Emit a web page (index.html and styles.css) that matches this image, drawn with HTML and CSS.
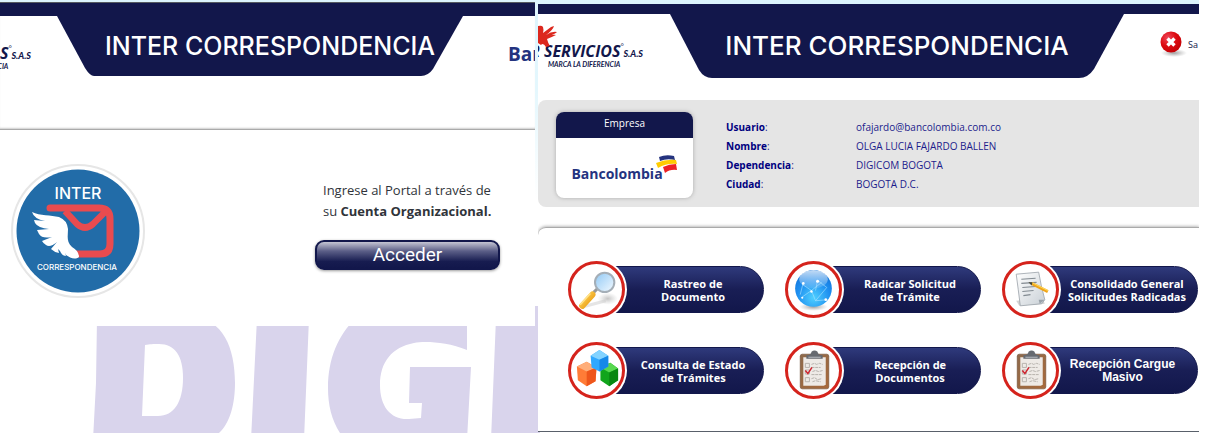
FILE: index.html
```html
<!DOCTYPE html>
<html lang="es">
<head>
<meta charset="utf-8">
<title>Inter Correspondencia</title>
<link rel="stylesheet" href="styles.css">
</head>
<body>
<svg width="0" height="0" class="defs" aria-hidden="true">
  <defs>
    <linearGradient id="glass" x1="0" y1="0" x2="1" y2="1"><stop offset="0" stop-color="#8fc8f5"/><stop offset="1" stop-color="#f4faff"/></linearGradient>
    <linearGradient id="handle" x1="0" y1="0" x2="1" y2="1"><stop offset="0" stop-color="#ffd75e"/><stop offset="1" stop-color="#e8960a"/></linearGradient>
    <radialGradient id="globe" cx=".5" cy=".75" r=".75"><stop offset="0" stop-color="#4fd0ff"/><stop offset=".6" stop-color="#1e8ff0"/><stop offset="1" stop-color="#1272d8"/></radialGradient>
    <linearGradient id="sheen" x1="0" y1="0" x2="0" y2="1"><stop offset="0" stop-color="#fff" stop-opacity=".75"/><stop offset="1" stop-color="#fff" stop-opacity=".1"/></linearGradient>
    <linearGradient id="wood" x1="0" y1="0" x2="1" y2="1"><stop offset="0" stop-color="#8d6a4c"/><stop offset="1" stop-color="#a8693a"/></linearGradient>
    <linearGradient id="page" x1="0" y1="0" x2="1" y2="1"><stop offset="0" stop-color="#fff"/><stop offset="1" stop-color="#c9d0d6"/></linearGradient>
    <radialGradient id="red" cx=".35" cy=".3" r=".8"><stop offset="0" stop-color="#f0485a"/><stop offset=".5" stop-color="#dc0a10"/><stop offset="1" stop-color="#c00004"/></radialGradient>
    <radialGradient id="shade"><stop offset="0" stop-color="#777" stop-opacity=".7"/><stop offset="1" stop-color="#999" stop-opacity="0"/></radialGradient>
    <symbol id="clipboard" viewBox="0 0 50 50">
      <rect x="12" y="9" width="28" height="34" rx="2" fill="url(#wood)" stroke="#6f4c33" stroke-width=".6"/>
      <path d="M15 12h22v27l-2 1H15z" fill="#eeeae6"/>
      <path d="M18 13.500h16v-3.500q-5-.500-5-3.500-3-2-6 0 0 3-5 3.500z" fill="#666a70"/>
      <path d="M20 12h12" stroke="#b9bdc2"/>
      <g fill="none" stroke="#b3aea9" stroke-width=".9"><path d="M17 18h4v4h-4zM17 24.500h4v4h-4zM17 32h4v4h-4z"/><path d="M23 19l3-1 2 1 3-1 3 1M23 22h9M24 26l3-1 3 1 4-1M23 29h10M23 33l3-1 3 2 4-1M24 36l3-1 5 1" stroke-dasharray="3 .7"/></g>
      <path d="M17 25l2.500 3 4-6" fill="none" stroke="#cf2530" stroke-width="1.500"/>
    </symbol>
  </defs>
</svg>
<svg class="watermark" viewBox="0 0 1205 433" preserveAspectRatio="xMinYMin meet" aria-hidden="true">
  <path fill="#d9d4ec" fill-rule="evenodd" d="M97 318h95c31 0 43 30 43 65 0 28-9 57-35 57H93l3-57zM145 345l-3 71h16c16 0 25-14 25-38 0-22-8-34-24-34-6 0-9 0-14 1z"/>
  <path fill="#d9d4ec" d="M257 318h52l-5 122h-53zM467 318v32c-20-8-42-9-53-7-22 4-34 19-34 42 0 22 11 35 29 34l12-1 1-15h-13l1-36h61l-4 73H345c-12-15-17-32-17-52 0-29 10-53 28-70zM496 318h39v-12h5v134h-49z"/>
</svg>
<main class="board">
  <section class="panel login">
    <header class="head">
      <div class="brand brand-cut"><span class="brand-name">OS</span><span class="brand-reg">°</span><span class="brand-sas">S.A.S</span><span class="brand-tag">NCIA</span></div>
      <div class="plate">
        <svg class="plate-bg" viewBox="0 0 406 60" preserveAspectRatio="none" aria-hidden="true"><path d="M0 0H406L376 53Q371 60 364 60H37Q33 60 28 52Z" fill="#12174b"/></svg>
        <h1 class="title">INTER CORRESPONDENCIA</h1>
      </div>
      <div class="bank-cut">Ban</div>
    </header>
    <div class="login-body">
      <svg class="badge" viewBox="0 0 140 140" role="img" aria-label="Inter Correspondencia">
        <circle cx="70" cy="70" r="66" fill="#fff" stroke="#e6e6e6" stroke-width="2"/>
        <circle cx="70" cy="70" r="61.500" fill="#226ca8"/>
        <text x="70" y="38" text-anchor="middle" class="badge-big">INTER</text>
        <text x="69" y="109" text-anchor="middle" class="badge-small">CORRESPONDENCIA</text>
        <path d="M42 47H91Q102 47 102 58V83Q102 93 92 93H66" fill="none" stroke="#e94b4f" stroke-width="7" stroke-linecap="round"/>
        <path d="M57 50L69 63Q77 70 85 63L99 49" fill="none" stroke="#e94b4f" stroke-width="6.500"/>
        <path d="M24 51C32 55 43 54 51 56Q59 59 60 68C60 75 58 80 64 86Q71 90 71 96C67 99 62 97 58 94L57 92 58 95Q54 95 52 90L50 88 51 92Q46 91 43 88L49 81Q42 87 38 84 35 82 34 80L44 76Q34 78 31 73L29 69 41 68Q30 67 27 62L26 59 37 60Q26 58 24 51Z" fill="#fff"/>
      </svg>
      <div class="access">
        <p class="lead">Ingrese al Portal a través de<br>su <strong>Cuenta Organizacional.</strong></p>
        <button class="enter" type="button">Acceder</button>
      </div>
    </div>
  </section>

  <section class="panel portal">
    <header class="head">
      <div class="brand brand-wide">
        <svg class="bird" viewBox="0 0 20 22" aria-hidden="true"><path d="M0 1Q4 0 5 2Q6 5 5 8L13 2 16 1Q15 5 8 10Q14 6 19 7Q17 9 11 11 16 9 18 10 14 12 9 14 10 18 12 21L8 22Q5 17 3 20L0 18z" fill="#dc281e"/></svg>
        <span class="brand-name">R SERVICIOS</span><span class="brand-reg">°</span><span class="brand-sas">S.A.S</span><span class="brand-tag">MARCA LA DIFERENCIA</span>
      </div>
      <div class="plate">
        <svg class="plate-bg" viewBox="0 0 454 64" preserveAspectRatio="none" aria-hidden="true"><path d="M0 0H454L424 55Q418 64 409 64H42Q34 64 29 56Z" fill="#12174b"/></svg>
        <h1 class="title title-big">INTER CORRESPONDENCIA</h1>
      </div>
      <a class="exit" href="#salir">
        <svg class="exit-icon" viewBox="0 0 28 28" aria-hidden="true"><ellipse cx="15" cy="23" rx="13" ry="4" fill="url(#shade)"/><circle cx="12" cy="12" r="10.500" fill="url(#red)"/><path d="M8.500 8.500l7 7M15.500 8.500l-7 7" stroke="#fff" stroke-width="3.400"/></svg>
        <span class="exit-text">Sa</span>
      </a>
    </header>
    <div class="profile">
      <div class="company">
        <h2 class="company-head">Empresa</h2>
        <div class="company-logo"><span>Bancolombia</span>
          <svg class="flag" viewBox="0 0 22 18" aria-hidden="true"><path d="M3 2Q10-1 18 1L19 5Q11 3 4 6z" fill="#24337f"/><path d="M0 8Q10 4 20 5L21 9Q11 8 2 13z" fill="#fc0"/><path d="M7 12Q13 9 20 9L21 15Q14 14 9 18z" fill="#ed2224"/></svg>
        </div>
      </div>
      <dl class="facts">
        <dt><b>Usuario</b>:</dt><dd>ofajardo@bancolombia.com.co</dd>
        <dt><b>Nombre</b>:</dt><dd>OLGA LUCIA FAJARDO BALLEN</dd>
        <dt><b>Dependencia</b>:</dt><dd>DIGICOM BOGOTA</dd>
        <dt><b>Ciudad</b>:</dt><dd>BOGOTA D.C.</dd>
      </dl>
    </div>
    <nav class="menu">
      <a class="item" href="#rastreo"><span class="disc"><svg viewBox="0 0 50 50" aria-hidden="true"><ellipse cx="36" cy="34" rx="10" ry="6" fill="url(#shade)" opacity=".6"/><path d="M12 42L34 36" stroke="#ccc" stroke-width="3" opacity=".5"/><path d="M22 28l4-4" stroke="#999" stroke-width="3"/><path d="M11 41L21 30" stroke="url(#handle)" stroke-width="6" stroke-linecap="round"/><path d="M9 40L19 29" stroke="#ffe38c" stroke-width="1.500"/><circle cx="33" cy="18" r="9.500" fill="url(#glass)" stroke="#a4aeb7" stroke-width="2"/></svg></span><span class="pill">Rastreo de<br>Documento</span></a>
      <a class="item" href="#radicar"><span class="disc"><svg viewBox="0 0 50 50" aria-hidden="true"><ellipse cx="25" cy="42" rx="14" ry="4" fill="url(#shade)"/><circle cx="25" cy="24" r="18" fill="url(#globe)"/><ellipse cx="25" cy="15" rx="14" ry="9" fill="url(#sheen)"/><path d="M14 20l9 6 10-8M23 26l4 10 12-1M23 26l-10 7M27 36l11-13-9-7-2 10M15 18l-3 12" fill="none" stroke="#a9e2ff" stroke-width=".6"/><g fill="#fff"><circle cx="15" cy="19" r="1.300"/><circle cx="29" cy="17" r="1.500"/><circle cx="23" cy="27" r="1.200"/><circle cx="37" cy="35" r="1.300"/><circle cx="14" cy="33" r="1"/></g></svg></span><span class="pill">Radicar Solicitud<br>de Trámite</span></a>
      <a class="item" href="#consolidado"><span class="disc"><svg viewBox="0 0 50 50" aria-hidden="true"><path d="M11 36l3 5 25-2-2-5z" fill="#aaa" opacity=".5"/><path d="M11 10L33 8Q35 20 39 35L36 39 15 41Q13 25 11 10z" fill="url(#page)" stroke="#9ba3aa" stroke-width=".8"/><path d="M34 39l5-4-6 0z" fill="#99a2aa"/><path d="M16 15l14-1M16 19l15-1M17 23l13-1M17 27l11-1M18 31l7-1" stroke="#828a91" stroke-width="1.100"/><path d="M26 19L42 27" stroke="#f0a51a" stroke-width="3"/><path d="M26 18L42 26" stroke="#ffd95c"/><path d="M23 18l4 0-1 3z" fill="#443"/></svg></span><span class="pill">Consolidado General<br>Solicitudes Radicadas</span></a>
      <a class="item" href="#consulta"><span class="disc"><svg viewBox="-1 2 52 50" aria-hidden="true"><path d="M29 24l10-5 8 6v12l-9 6-9-6z" fill="#11a51c"/><path d="M29 24l10-5 8 6-9 4z" fill="#57d84f"/><path d="M38 29l9-4v12l-9 6z" fill="#078711"/><path d="M5 23l10-5 10 6-1 14-9 5-9-6z" fill="#ff7c37"/><path d="M5 23l10-5 10 6-10 4z" fill="#ffae7a"/><path d="M15 28l10-4-1 14-9 5z" fill="#ee561c"/><path d="M19 12l9-6 9 6v11l-9 5-8-4z" fill="#30a8ff"/><path d="M19 12l9-6 9 6-9 4z" fill="#83d3ff"/><path d="M28 16l9-4v11l-9 5z" fill="#1688e8"/></svg></span><span class="pill">Consulta de Estado<br>de Trámites</span></a>
      <a class="item" href="#recepcion"><span class="disc"><svg aria-hidden="true"><use href="#clipboard"/></svg></span><span class="pill">Recepción de<br>Documentos</span></a>
      <a class="item" href="#masivo"><span class="disc"><svg aria-hidden="true"><use href="#clipboard"/></svg></span><span class="pill pill-alt">Recepción Cargue<br>Masivo</span></a>
    </nav>
  </section>
</main>
</body>
</html>
```
FILE: styles.css
```css
* { box-sizing: border-box; }
body {
  margin: 0;
  font-family: "Open Sans", "Noto Sans", sans-serif;
  background: linear-gradient(#dcf4fd, #e4f7fd 90px, #fff 200px);
  overflow-x: hidden;
}
.defs { position: absolute; }
.watermark { position: absolute; left: 0; top: 0; width: 100%; z-index: -1; }
.board {
  display: grid;
  grid-template-columns: 535fr 661fr;
  gap: 3px;
  align-items: start;
  padding: 2px 6px 2px 0;
  background: linear-gradient(#fff, #fff) right / 6px 100% no-repeat;
}
.panel { background: #fff; overflow: hidden; min-width: 0; }
.login { border-top: 1px solid #555a60; }
.portal { margin-top: 2px; border-bottom: 1px solid #59606a; }

.head { display: grid; color: #12174b; }
.login .head {
  grid-template-columns: minmax(0, 57fr) minmax(0, 406fr) minmax(0, 72fr);
  border-top: 13px solid #12174b;
  padding-bottom: 53px;
  border-bottom: 1px solid #aaa;
  box-shadow: 0 -2px 2px -1px #ccc inset;
}
.portal .head {
  grid-template-columns: minmax(0, 132fr) minmax(0, 454fr) minmax(0, 75fr);
  border-top: 10px solid #12174b;
  padding-bottom: 22px;
}
.plate { display: grid; align-items: center; justify-items: center; height: 60px; }
.portal .plate { height: 64px; }
.plate-bg { grid-area: 1 / 1; width: 100%; height: 100%; }
.title {
  grid-area: 1 / 1;
  z-index: 1;
  margin: 0;
  color: #fff;
  font: 500 25px/32px Inter, sans-serif;
  white-space: nowrap;
}
.login .title { margin-left: 20px; }
.portal .title-big { font-size: 26px; }

.brand {
  display: grid;
  grid-template-columns: auto 3px auto;
  align-content: center;
  align-items: baseline;
  justify-content: end;
  position: relative;
  white-space: nowrap;
}
.brand-cut { padding: 21px 26px 0 0; }
.brand-wide { padding: 18px 27px 0 0; }
.brand-name { font: italic 700 16px/18px "Open Sans", sans-serif; }
.brand-reg { font-size: 8px; align-self: start; line-height: 8px; }
.brand-sas { font: italic 900 9px/12px Lato, sans-serif; }
.brand-tag { grid-column: 1; justify-self: end; font: italic 700 7px/8px Lato, sans-serif; }
.bird { position: absolute; left: 0; top: 11px; width: 20px; height: 22px; }
.bank-cut {
  align-self: center;
  justify-self: start;
  padding: 16px 0 0 45px;
  color: #24337f;
  font: 700 19px/24px "Open Sans", sans-serif;
}

.login-body { display: flex; justify-content: space-between; padding: 31px 35px 25px 8px; }
.badge { width: 140px; height: 140px; flex: none; }
.badge-big { font: 500 16px Inter, sans-serif; fill: #fff; }
.badge-small { font: 500 8px Inter, sans-serif; fill: #fff; }
.access { width: 185px; padding-top: 19px; }
.lead { margin: 0 0 18px 8px; font-size: 13px; line-height: 21px; color: #30343a; white-space: nowrap; }
.enter {
  display: block;
  width: 100%;
  height: 30px;
  border: 2px solid #12174b;
  border-radius: 9px;
  background: linear-gradient(#c4c5d3, #5b5e87 35%, #171c50 75%, #12174b);
  box-shadow: 0 1px 3px #999;
  color: #fff;
  font: 400 19px/24px Roboto, sans-serif;
  padding: 0;
}

.exit { display: flex; gap: 1px; align-items: center; padding: 0 0 4px 35px; white-space: nowrap; color: #12174b; text-decoration: none; font-size: 9px; }
.exit-icon { width: 28px; height: 28px; flex: none; }

.profile { display: flex; padding: 12px 18px 9px; gap: 33px; background: #e5e5e5; border-radius: 8px 0 0 8px; }
.company { width: 137px; flex: none; border-radius: 8px; overflow: hidden; background: #fff; box-shadow: 0 0 4px #aaa; }
.company-head { margin: 0; height: 26px; background: #12174b; color: #fff; font-size: 10px; font-weight: 400; line-height: 22px; text-align: center; }
.company-logo { display: flex; height: 60px; align-items: center; justify-content: center; padding-top: 12px; color: #24337f; font: 700 14px/20px "Open Sans", sans-serif; }
.flag { width: 22px; height: 18px; margin: 0 0 20px -7px; }
.facts { display: grid; grid-template-columns: 130px 1fr; align-content: start; margin: 6px 0 0; color: #1c1c8c; font-size: 10px; line-height: 19px; }
.facts dd { margin: 0; }
.facts b { color: #00007f; }

.menu {
  display: grid;
  grid-template-columns: 196px 196px 196px;
  justify-content: space-between;
  row-gap: 24px;
  margin-top: 20px;
  padding: 33px 1px 32px 30px;
  border-top: 1px solid #aaa;
  border-radius: 8px 0 0 0;
  box-shadow: 0 -1px 3px #bbb;
}
.item { display: flex; align-items: center; color: #fff; text-decoration: none; }
.disc { z-index: 1; flex: none; display: grid; width: 57px; height: 57px; border: 3px solid #d5231c; border-radius: 50%; background: #fff; box-shadow: 0 0 0 2px #fff; }
.disc svg { width: 100%; height: 100%; }
.pill {
  flex: 1;
  display: grid;
  align-content: center;
  height: 47px;
  margin-left: -12px;
  padding-left: 9px;
  border: 1px solid #12174b;
  border-radius: 0 24px 24px 0;
  background: linear-gradient(#2f3a7c, #191e55 50%, #12174b);
  font: 700 11px/13px "Open Sans", sans-serif;
  text-align: center;
  white-space: nowrap;
}
.pill-alt { padding-left: 0; font: 700 12px/13px "Liberation Sans", sans-serif; }
```
